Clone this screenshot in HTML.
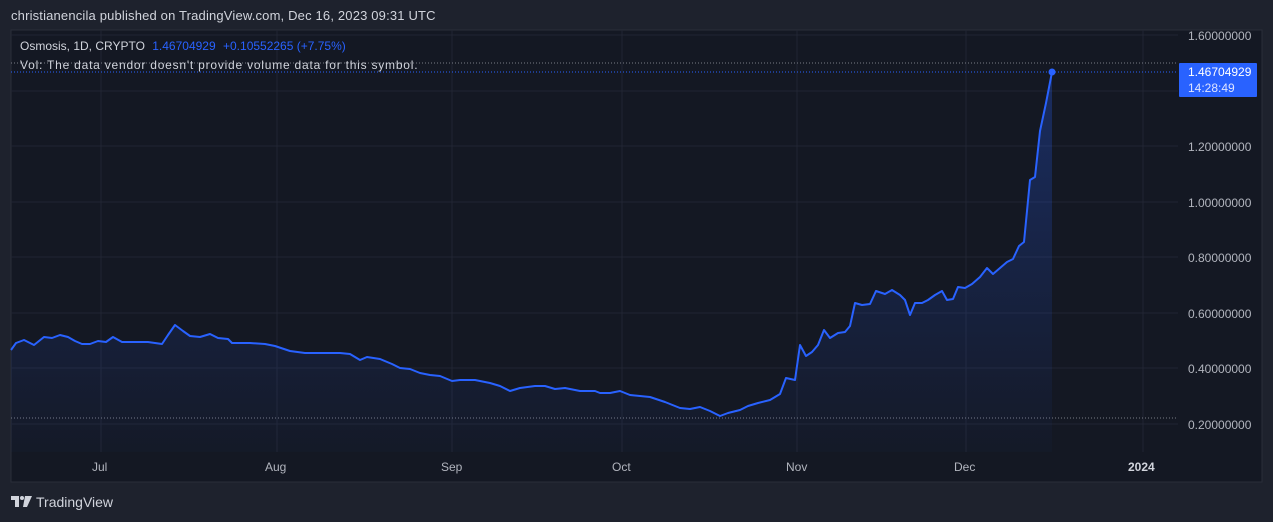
<!DOCTYPE html>
<html><head><style>
body{margin:0;width:1273px;height:522px;background:#1e222d;font-family:"Liberation Sans","DejaVu Sans",sans-serif;overflow:hidden;position:relative;color:#d1d4dc}
.t{position:absolute;white-space:nowrap}
</style></head><body>
<div class="t" style="left:11px;top:8px;font-size:13px;color:#d1d4dc;letter-spacing:0.17px">christianencila published on TradingView.com, Dec 16, 2023 09:31 UTC</div>
<svg style="position:absolute;left:0;top:0" width="1273" height="522">
<defs><linearGradient id="g" x1="0" y1="0" x2="0" y2="1"><stop offset="0" stop-color="#2962ff" stop-opacity="0.28"/><stop offset="1" stop-color="#2962ff" stop-opacity="0.02"/></linearGradient></defs>
<rect x="11" y="30" width="1251" height="452" fill="#141823" stroke="#2a2e39"/>
<g stroke="#212533" stroke-width="1">
<line x1="101" y1="30" x2="101" y2="452"/><line x1="277" y1="30" x2="277" y2="452"/><line x1="452" y1="30" x2="452" y2="452"/><line x1="622" y1="30" x2="622" y2="452"/><line x1="797" y1="30" x2="797" y2="452"/><line x1="966" y1="30" x2="966" y2="452"/><line x1="1143" y1="30" x2="1143" y2="452"/>
<line x1="11" y1="424" x2="1178" y2="424"/><line x1="11" y1="368" x2="1178" y2="368"/><line x1="11" y1="313" x2="1178" y2="313"/><line x1="11" y1="257" x2="1178" y2="257"/><line x1="11" y1="202" x2="1178" y2="202"/><line x1="11" y1="146" x2="1178" y2="146"/><line x1="11" y1="91" x2="1178" y2="91"/><line x1="11" y1="35" x2="1178" y2="35"/>
</g>
<line x1="11" y1="63" x2="1178" y2="63" stroke="#787b86" stroke-dasharray="1,2"/>
<line x1="11" y1="418" x2="1178" y2="418" stroke="#787b86" stroke-dasharray="1,2"/>
<line x1="11" y1="72" x2="1178" y2="72" stroke="#2962ff" stroke-dasharray="1,2"/>
<polygon fill="url(#g)" points="11,350 16,343 24,340 34,345 44,337 52,338 60,335 68,337 75,341 82,344 90,344 98,341 106,342 113,337 122,342 135,342 148,342 162,344 168,335 175,325 183,331 190,336 200,337 210,334 218,338 228,339 232,343 250,343 265,344 275,346 290,351 305,353 320,353 340,353 350,354 360,360 367,357 380,359 392,364 400,368 410,369 420,373 430,375 440,376 452,381 460,380 475,380 490,383 500,386 510,391 520,388 535,386 545,386 555,389 565,388 580,391 595,391 600,393 610,393 620,391 630,395 650,397 665,402 680,408 690,409 700,407 710,411 720,416 728,413 740,410 748,406 758,403 770,400 780,394 786,378 795,380 800,345 806,356 812,352 818,345 824,330 830,338 838,333 845,332 850,326 855,303 862,305 870,304 876,291 885,294 892,290 900,295 905,300 910,315 915,303 922,303 928,300 935,295 942,291 947,300 953,299 958,287 965,288 972,284 980,277 987,268 993,274 1000,268 1007,262 1013,259 1019,246 1024,242 1030,180 1035,177 1040,131 1046,103 1052,72 1052,452 11,452"/>
<polyline fill="none" stroke="#2962ff" stroke-width="2" stroke-linejoin="round" points="11,350 16,343 24,340 34,345 44,337 52,338 60,335 68,337 75,341 82,344 90,344 98,341 106,342 113,337 122,342 135,342 148,342 162,344 168,335 175,325 183,331 190,336 200,337 210,334 218,338 228,339 232,343 250,343 265,344 275,346 290,351 305,353 320,353 340,353 350,354 360,360 367,357 380,359 392,364 400,368 410,369 420,373 430,375 440,376 452,381 460,380 475,380 490,383 500,386 510,391 520,388 535,386 545,386 555,389 565,388 580,391 595,391 600,393 610,393 620,391 630,395 650,397 665,402 680,408 690,409 700,407 710,411 720,416 728,413 740,410 748,406 758,403 770,400 780,394 786,378 795,380 800,345 806,356 812,352 818,345 824,330 830,338 838,333 845,332 850,326 855,303 862,305 870,304 876,291 885,294 892,290 900,295 905,300 910,315 915,303 922,303 928,300 935,295 942,291 947,300 953,299 958,287 965,288 972,284 980,277 987,268 993,274 1000,268 1007,262 1013,259 1019,246 1024,242 1030,180 1035,177 1040,131 1046,103 1052,72"/>
<circle cx="1052" cy="72" r="3.5" fill="#2962ff"/>
<rect x="1179" y="63" width="78" height="34" fill="#2962ff" rx="1"/>
</svg>
<div class="t" style="left:20px;top:39px;font-size:12px;color:#d1d4dc">Osmosis, 1D, CRYPTO <span style="color:#2962ff;margin-left:4px">1.46704929</span> <span style="color:#2962ff;margin-left:4px">+0.10552265 (+7.75%)</span></div>
<div class="t" style="left:20px;top:58px;font-size:12px;color:#d1d4dc;letter-spacing:0.78px">Vol: The data vendor doesn't provide volume data for this symbol.</div>
<div class="t" style="left:1188px;top:29px;font-size:12px;color:#b2b5be">1.60000000</div>
<div class="t" style="left:1188px;top:140px;font-size:12px;color:#b2b5be">1.20000000</div>
<div class="t" style="left:1188px;top:196px;font-size:12px;color:#b2b5be">1.00000000</div>
<div class="t" style="left:1188px;top:251px;font-size:12px;color:#b2b5be">0.80000000</div>
<div class="t" style="left:1188px;top:307px;font-size:12px;color:#b2b5be">0.60000000</div>
<div class="t" style="left:1188px;top:362px;font-size:12px;color:#b2b5be">0.40000000</div>
<div class="t" style="left:1188px;top:418px;font-size:12px;color:#b2b5be">0.20000000</div>
<div class="t" style="left:1188px;top:65px;font-size:12px;color:#fff">1.46704929</div>
<div class="t" style="left:1188px;top:81px;font-size:12px;color:#dfe4ff">14:28:49</div>
<div class="t" style="left:92px;top:460px;font-size:12px;color:#b2b5be">Jul</div>
<div class="t" style="left:265px;top:460px;font-size:12px;color:#b2b5be">Aug</div>
<div class="t" style="left:441px;top:460px;font-size:12px;color:#b2b5be">Sep</div>
<div class="t" style="left:612px;top:460px;font-size:12px;color:#b2b5be">Oct</div>
<div class="t" style="left:786px;top:460px;font-size:12px;color:#b2b5be">Nov</div>
<div class="t" style="left:954px;top:460px;font-size:12px;color:#b2b5be">Dec</div>
<div class="t" style="left:1128px;top:460px;font-size:12px;color:#d1d4dc;font-weight:bold">2024</div>
<svg style="position:absolute;left:11px;top:496px" width="22" height="12"><path d="M0 0h8v11h-4v-7h-4z" fill="#d1d4dc"/><circle cx="11" cy="2" r="2" fill="#d1d4dc"/><path d="M14 0h7l-5 11h-4z" fill="#d1d4dc"/></svg>
<div class="t" style="left:36px;top:494px;font-size:14px;color:#d1d4dc">TradingView</div>
</body></html>
